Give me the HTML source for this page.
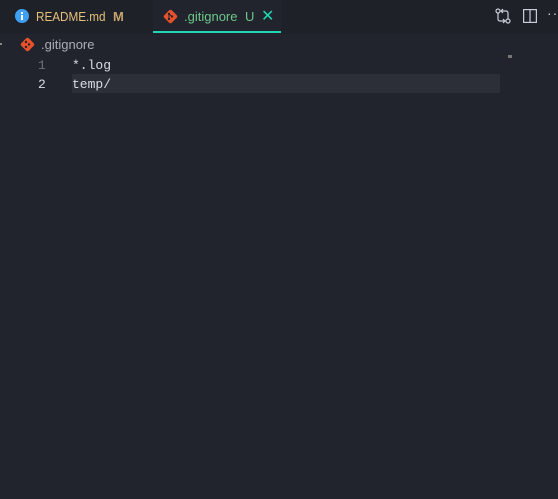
<!DOCTYPE html>
<html><head><style>
body{margin:0;width:558px;height:499px;background:#22242d;overflow:hidden;font-family:"Liberation Sans",sans-serif;position:relative}
.a{position:absolute;white-space:nowrap}
.mono{font-family:"Liberation Mono",monospace;font-size:13px}
</style></head><body>
<div class="a" style="left:0;top:0;width:558px;height:34px;background:#1f2128"></div>
<div class="a" style="left:153px;top:0;width:128px;height:34px;background:#22242d"></div>
<div class="a" style="left:153px;top:31px;width:128px;height:2px;background:#1ed8b4"></div>
<svg class="a" style="left:15px;top:9px" width="14" height="14"><circle cx="7" cy="7" r="7" fill="#3f9ff2"/><rect x="6" y="6" width="2" height="5" fill="#fff"/><rect x="6" y="3" width="2" height="2" fill="#fff"/></svg>
<div class="a" style="left:36px;top:9px;font-size:13px;color:#e5c07b;transform:scaleX(0.9);transform-origin:left">README.md</div>
<div class="a" style="left:113px;top:9px;font-size:13px;color:#c7a46a;font-weight:bold">M</div>
<svg class="a" style="left:163px;top:9px" width="15" height="15" viewBox="0 0 15 15"><rect x="2.2" y="2.2" width="10.6" height="10.6" rx="2" fill="#e8512b" transform="rotate(45 7.5 7.5)"/><circle cx="6" cy="5" r="1.2" fill="#22242d"/><circle cx="6" cy="10" r="1.2" fill="#22242d"/><circle cx="9" cy="7.5" r="1.2" fill="#22242d"/><path d="M6 5V10M6 5L9 7.5" stroke="#22242d" stroke-width="1"/></svg>
<div class="a" style="left:184px;top:9px;font-size:13px;color:#6dc68a">.gitignore</div>
<div class="a" style="left:245px;top:9px;font-size:13px;color:#6dc68a">U</div>
<div class="a" style="left:261px;top:6px;font-size:16px;color:#1ed8b4">✕</div>
<svg class="a" style="left:495px;top:8px" width="16" height="16" fill="none" stroke="#c8ccd8" stroke-width="1.2"><circle cx="3" cy="3" r="2"/><circle cx="13" cy="13" r="2"/><path d="M3 5V11Q3 13 5 13H10M13 11V5Q13 3 11 3H6M8 1L6 3L8 5M8 11L10 13L8 15"/></svg>
<svg class="a" style="left:523px;top:9px" width="14" height="14" fill="none" stroke="#c8ccd8" stroke-width="1.2"><rect x="0.6" y="0.6" width="12.8" height="12.8"/><path d="M7 1V13"/></svg>
<div class="a" style="left:547px;top:5px;font-size:14px;color:#c8ccd8;letter-spacing:1px">··</div>
<div class="a" style="left:0;top:43px;width:2px;height:2px;background:#888"></div>
<svg class="a" style="left:20px;top:37px" width="15" height="15" viewBox="0 0 15 15"><rect x="2.2" y="2.2" width="10.6" height="10.6" rx="2" fill="#e8512b" transform="rotate(45 7.5 7.5)"/><circle cx="6" cy="5" r="1.2" fill="#22242d"/><circle cx="6" cy="10" r="1.2" fill="#22242d"/><circle cx="9" cy="7.5" r="1.2" fill="#22242d"/></svg>
<div class="a" style="left:41px;top:37px;font-size:13px;color:#a9adb8">.gitignore</div>
<div class="a" style="left:508px;top:55px;width:4px;height:3px;background:#777"></div>
<div class="a" style="left:72px;top:74px;width:428px;height:19px;background:#2c2e38"></div>
<div class="a mono" style="left:38px;top:58px;color:#6b6f7a">1</div>
<div class="a mono" style="left:38px;top:77px;color:#d8dce5">2</div>
<div class="a mono" style="left:72px;top:58px;color:#d8dce5">*.log</div>
<div class="a mono" style="left:72px;top:77px;color:#d8dce5">temp/</div>
</body></html>
